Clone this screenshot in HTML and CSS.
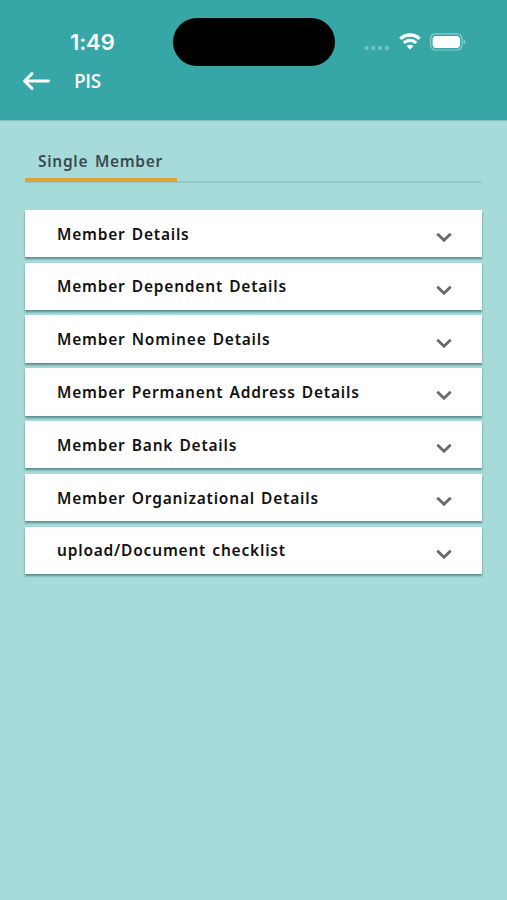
FILE: index.html
```
<!DOCTYPE html>
<html lang="en">
<head>
  <meta charset="UTF-8">
  <meta name="viewport" content="width=device-width, initial-scale=1.0">
  <title>PIS</title>
  <link rel="stylesheet" href="styles.css">
</head>
<body>
  <!-- icon shared by all the rows -->
  <svg class="sprite" width="0" height="0">
    <symbol id="chevron" viewBox="0 0 16 11">
      <path d="M1.3 1.8 L8 8.3 L14.7 1.8" fill="none" stroke="currentColor" stroke-width="2.9"/>
    </symbol>
  </svg>

  <header class="header">
    <div class="status-bar">
      <span class="time">1:49</span>
      <div class="island"></div>
      <div class="status-icons">
        <svg class="signal" width="26" height="6" viewBox="0 0 26 6">
          <circle cx="2.5" cy="3" r="2.2"/>
          <circle cx="9.3" cy="3" r="2.2"/>
          <circle cx="16.1" cy="3" r="2.2"/>
          <circle cx="22.9" cy="3" r="2.2"/>
        </svg>
        <svg class="wifi" width="22" height="17" viewBox="0 0 22 17">
          <path d="M1.3 5.8 C6.6 0.7 15.4 0.7 20.7 5.8" stroke-width="3.3"/>
          <path d="M4.8 9.8 C8.3 6.5 13.7 6.5 17.2 9.8" stroke-width="3.1"/>
          <path class="wifi-dot" d="M11 16.5 L7.6 13.1 C9.4 11.2 12.6 11.2 14.4 13.1 Z"/>
        </svg>
        <svg class="battery" width="36" height="18" viewBox="0 0 36 18">
          <rect class="battery-frame" x="0.6" y="0.8" width="31.4" height="16.2" rx="5"/>
          <rect x="2.6" y="2.9" width="27.4" height="12" rx="3.5" fill="#fff"/>
          <path class="battery-tip" d="M33.6 6.4 C36 7.4 36 10.4 33.6 11.4 Z"/>
        </svg>
      </div>
    </div>
    <div class="title-bar">
      <svg class="back" width="27" height="18" viewBox="0 0 27 18">
        <path d="M25.5 9 H1.8 M9 1.6 L1.6 9 L9 16.4"/>
      </svg>
      <h1 class="title">PIS</h1>
    </div>
  </header>

  <main class="content">
    <nav class="tabs">
      <div class="tab active">Single Member</div>
    </nav>

    <div class="accordion">
      <div class="panel"><span>Member Details</span><svg class="chevron"><use href="#chevron"/></svg></div>
      <div class="panel"><span>Member Dependent Details</span><svg class="chevron"><use href="#chevron"/></svg></div>
      <div class="panel"><span>Member Nominee Details</span><svg class="chevron"><use href="#chevron"/></svg></div>
      <div class="panel"><span>Member Permanent Address Details</span><svg class="chevron"><use href="#chevron"/></svg></div>
      <div class="panel"><span>Member Bank Details</span><svg class="chevron"><use href="#chevron"/></svg></div>
      <div class="panel"><span>Member Organizational Details</span><svg class="chevron"><use href="#chevron"/></svg></div>
      <div class="panel"><span>upload/Document checklist</span><svg class="chevron"><use href="#chevron"/></svg></div>
    </div>
  </main>
</body>
</html>
```

FILE: styles.css
```
* {
  box-sizing: border-box;
}

body {
  margin: 0;
  min-height: 100vh;
  background: #a6dbd9;
  font-family: "Noto Sans", "Open Sans", sans-serif;
}

.sprite {
  display: block;
}

/* ===== Header ===== */
.header {
  height: 120px;
  padding-top: 18px;
  background: #36a6a6;
  color: #fff;
  box-shadow: 0 1px 1px rgba(0, 90, 90, 0.2);
}

.status-bar {
  display: grid;
  grid-template-columns: 173px 162px 1fr;
  align-items: center;
  height: 48px;
}

.time {
  padding-left: 70px;
  font-family: Inter, sans-serif;
  font-size: 22px;
  font-weight: 600;
  letter-spacing: -0.1px;
}

.island {
  height: 48px;
  border-radius: 24px;
  background: #000;
}

.status-icons {
  display: flex;
  align-items: center;
  padding-left: 29px;
}

.signal {
  margin-top: 11px;
  fill: #70c2c1;
}

.wifi {
  margin-left: 9px;
  margin-top: -1px;
  fill: none;
  stroke: #fff;
}

.wifi-dot {
  fill: #fff;
  stroke: none;
}

.battery {
  margin-left: 9px;
}

.battery-frame {
  fill: none;
  stroke: #8bcdcb;
  stroke-width: 1.2;
}

.battery-tip {
  fill: #8bcdcb;
}

.title-bar {
  display: flex;
  align-items: center;
  gap: 24px;
  height: 30px;
  padding-left: 23px;
}

.back {
  fill: none;
  stroke: #fff;
  stroke-width: 2.9;
  stroke-linecap: round;
  stroke-linejoin: round;
}

.title {
  margin: 0;
  font-family: "Open Sans", "Noto Sans", sans-serif;
  font-size: 19px;
  font-weight: 600;
  letter-spacing: -0.4px;
}

/* ===== Tabs ===== */
.content {
  padding: 20px 25px 0;
}

.tabs {
  display: flex;
  height: 43px;
  border-bottom: 2px solid #93c8c6;
}

.tab {
  width: 152px;
  height: 42px;
  padding-left: 13px;
  color: #3b4a52;
  font-size: 15.5px;
  font-weight: 600;
  line-height: 42px;
  letter-spacing: 0.7px;
  word-spacing: 2px;
  white-space: nowrap;
}

.tab.active {
  border-bottom: 4px solid #dfa134;
}

/* ===== Accordion ===== */
.accordion {
  display: flex;
  flex-direction: column;
  gap: 5.3px;
  margin-top: 26.8px;
}

.panel {
  display: flex;
  align-items: center;
  justify-content: space-between;
  height: 47.5px;
  padding: 0 30px 0 32px;
  background: #fff;
  color: #111;
  font-size: 15.5px;
  font-weight: 600;
  letter-spacing: 0.8px;
  word-spacing: 1.3px;
  box-shadow: 0 2px 2px rgba(20, 60, 65, 0.5);
}

.chevron {
  width: 16px;
  height: 11px;
  margin-top: 8px;
  color: #6b6b6b;
}
```
